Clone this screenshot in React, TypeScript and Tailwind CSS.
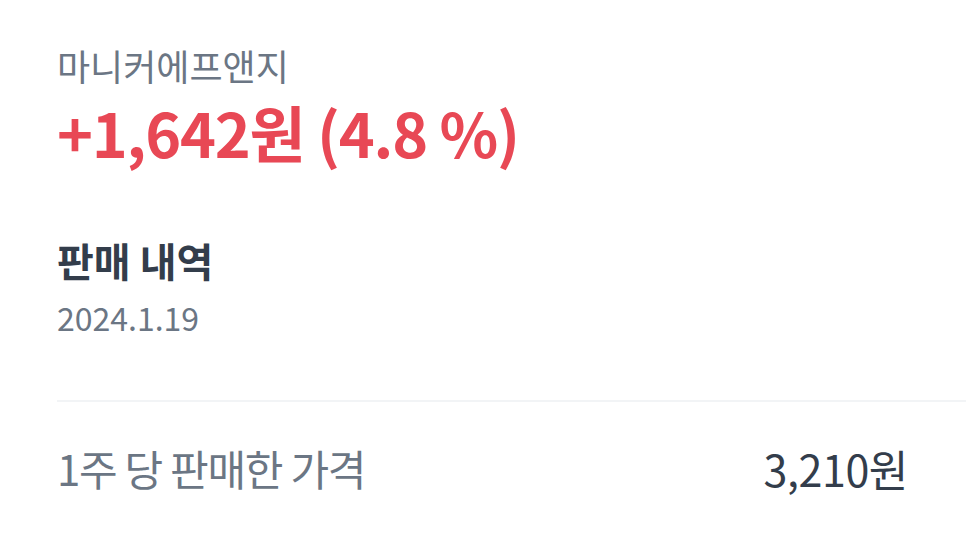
export default function App() {
  return (
    <div
      className="min-h-screen bg-white pl-[57px] pt-[42px]"
      style={{ fontFamily: '"Noto Sans CJK KR", "Noto Sans", sans-serif' }}
    >
      {/* Summary */}
      <p className="text-[36px] leading-[46px] text-[#6b7684]">마니커에프앤지</p>
      <p className="mt-[12px] text-[61px] leading-[64px] font-bold tracking-[-0.02em] text-[#e84855]">
        +1,642원 (4.8 %)
      </p>

      {/* History */}
      <h2 className="mt-[70px] text-[40px] leading-[52px] font-bold text-[#333d4b]">판매 내역</h2>
      <p className="mt-[9px] text-[32px] leading-[44px] text-[#6b7684]">2024.1.19</p>

      <div className="mt-[61px] border-t-2 border-[#f2f4f6]" />

      <div className="flex items-center justify-between pr-[58px] pt-[37px]">
        <span className="text-[42px] leading-[58px] tracking-[-0.03em] text-[#6b7684]">1주 당 판매한 가격</span>
        <span className="text-[43px] leading-[58px] tracking-[-0.01em] text-[#333d4b]">3,210원</span>
      </div>
    </div>
  );
}
